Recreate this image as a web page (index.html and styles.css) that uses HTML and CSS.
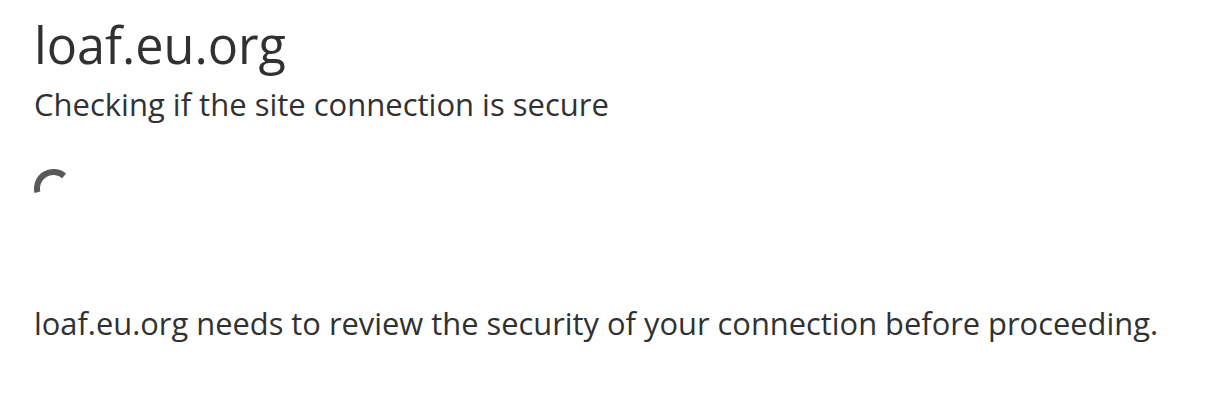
FILE: index.html
```html
<!DOCTYPE html>
<html lang="en">
<head>
<meta charset="utf-8">
<title>Just a moment...</title>
<link rel="stylesheet" href="styles.css">
</head>
<body>
<div class="main-wrapper">
  <div class="main-content">
    <h1 class="zone-name-title">loaf.eu.org</h1>
    <h2 class="h2">Checking if the site connection is secure</h2>
    <div class="spinner">
      <svg width="39" height="39" viewBox="0 0 39 39" aria-hidden="true">
        <path d="M3.42 23.21 A16.5 16.5 0 0 1 30.11 6.86" fill="none" stroke="#595959" stroke-width="6"/>
      </svg>
    </div>
    <p class="body-text">loaf.eu.org needs to review the security of your connection before proceeding.</p>
  </div>
</div>
</body>
</html>
```
FILE: styles.css
```css
* { box-sizing: border-box; }
html, body { margin: 0; padding: 0; background: #ffffff; }
body {
  color: #313131;
  font-family: "Open Sans", "Noto Sans", sans-serif;
}
.main-content {
  padding: 15px 0 0 34px;
  display: flex;
  flex-direction: column;
  align-items: flex-start;
}
.zone-name-title {
  margin: 0;
  font-size: 50.4px;
  line-height: 60px;
  font-weight: 400;
}
.h2 {
  margin: 10px 0 0;
  font-size: 31px;
  line-height: 38px;
  font-weight: 400;
}
.spinner {
  margin-top: 46px;
  width: 39px;
  height: 39px;
}
.spinner svg { display: block; }
.body-text {
  margin: 96px 0 0;
  font-size: 30.85px;
  line-height: 38px;
}
```
